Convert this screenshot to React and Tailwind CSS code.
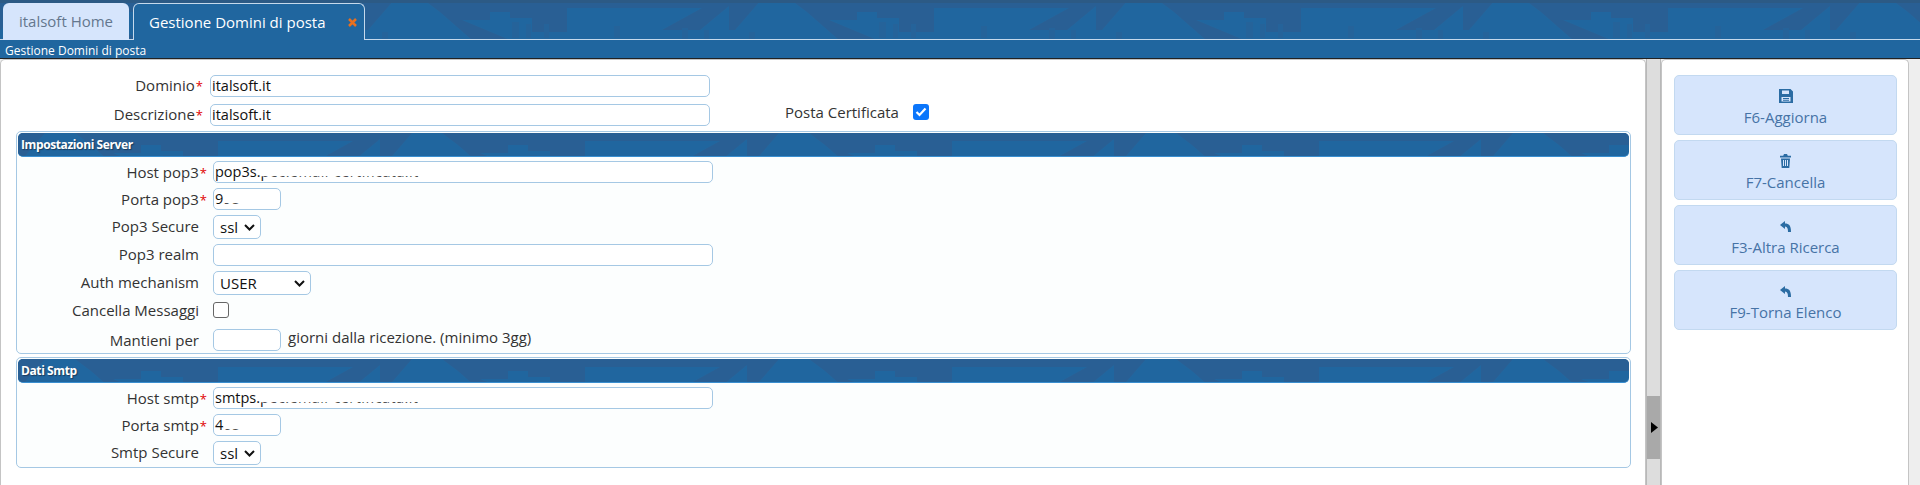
import React from 'react';

const Pattern = ({ id }) => (
  <svg className="absolute inset-0 w-full h-full">
    <defs>
      <pattern id={id} x="-5" width="367" height="40" patternUnits="userSpaceOnUse">
        <g fill="#295f94">
          <polygon points="0,0 32,0 6,30 0,30" />
          <polygon points="62,0 148,0 148,12 128,12 128,20 100,20 148,40 110,40 78,12" />
          <polygon points="148,0 270,0 270,8 205,8 205,32 170,32 170,18 148,18" />
          <polygon points="270,0 367,0 367,6 338,30 300,30 340,8 270,8" />
        </g>
        <g fill="#25639a">
          <rect x="20" y="32" width="6" height="8" />
          <rect x="150" y="22" width="7" height="16" />
          <rect x="164" y="24" width="5" height="14" />
          <rect x="182" y="24" width="5" height="14" />
          <rect x="252" y="26" width="6" height="12" />
          <rect x="320" y="28" width="6" height="12" />
          <rect x="342" y="30" width="5" height="10" />
        </g>
      </pattern>
    </defs>
    <rect width="100%" height="100%" fill={`url(#${id})`} />
  </svg>
);

const Label = ({ text, required, top, lift }) => (
  <div className={`${top ? 'w-[194px] pr-[7px]' : 'w-[191px] pr-[6px]'} ${lift ? 'pb-[2px]' : ''} shrink-0 text-right text-[#333] leading-[20px]`}>
    {text}
    {required ? <span className="text-[#e00000] text-[13px] ml-[1px]">*</span> : <span className="inline-block w-[8px]" />}
  </div>
);

const TextBox = ({ width = 'w-[500px]', children }) => (
  <div className={`${width} h-[22px] shrink-0 flex items-center bg-white border border-[#a5c8e4] rounded-[5px] pl-[1px] text-[14.500px] text-[#111] overflow-hidden whitespace-nowrap`}>
    {children}
  </div>
);

// the reference has these values partly wiped out, only the bottom of the letters is left
const Wiped = ({ children }) => (
  <span className="[clip-path:inset(70%_0_0_0)] tracking-[0.4px]">{children}</span>
);

const SelectBox = ({ width, value }) => (
  <div className={`${width} h-[24px] shrink-0 flex items-center justify-between bg-white border border-[#a5c8e4] rounded-[5px] pl-[6px] pr-[5px] text-[15px] text-[#111]`}>
    {value}
    <svg width="11" height="7" viewBox="0 0 11 7"><path d="M1 1l4.500 4.500L10 1" fill="none" stroke="#111" strokeWidth="2" /></svg>
  </div>
);

const Row = ({ label, required, lift, mt, children }) => (
  <div className={`flex items-center ${mt}`}>
    <Label text={label} required={required} lift={lift} />
    {children}
  </div>
);

const SectionHeader = ({ id, title }) => (
  <div className="relative h-[24px] mx-[1px] mt-[1px] bg-[#20669f] rounded-[5px] border-b border-[#3a8fd0] overflow-hidden flex items-center pl-[3px]">
    <Pattern id={id} />
    <span className="relative text-white font-bold text-[12px] tracking-[-0.4px] [text-shadow:1px_1px_1px_#1a3c5c]">{title}</span>
  </div>
);

const ActionButton = ({ icon, label }) => (
  <button className="h-[60px] w-[223px] flex flex-col items-center pt-[12px] bg-[#d6e5fc] border border-[#c3d9f0] rounded-[5px] text-[#4673a6] text-[15px]">
    <span className="h-[16px] flex items-center text-[#2b6ca3]">{icon}</span>
    <span className="leading-[20px] mt-[3px]">{label}</span>
  </button>
);

const SaveIcon = () => (
  <svg width="14" height="14" viewBox="0 0 14 14">
    <path
      fillRule="evenodd"
      fill="currentColor"
      d="M0 0h11.500L14 2.500V14H0zM3 1.500V5h7V1.500zM2.500 8v4.500h9V8zM4 9h6v1H4zM4 10.800h6v1H4z"
    />
  </svg>
);

const TrashIcon = () => (
  <svg width="11" height="14" viewBox="0 0 11 14">
    <path
      fillRule="evenodd"
      fill="currentColor"
      d="M0 1.800h3.200L4 0h3l.8 1.800H11v1.700H0zM1 4.500h9L9.300 14H1.700zM3 6v6h1V6zM5 6v6h1V6zM7 6v6h1V6z"
    />
  </svg>
);

const ReplyIcon = () => (
  <svg width="11" height="11" viewBox="0 0 11 11">
    <path fill="currentColor" d="M0 4L5 0V2.500C9 2.500 11 4.500 11 11H8C8 7.500 7.500 6 5 5.500V8Z" />
  </svg>
);

export default function App() {
  return (
    <div className="h-[485px] overflow-hidden bg-[#eeeeee] text-[15px]" style={{ fontFamily: '"Open Sans", sans-serif' }}>
      <div className="relative h-[40px] bg-[#20669f] overflow-hidden">
        <Pattern id="tabs-bg" />
        <div className="absolute left-0 right-0 top-0 h-[3px] bg-[#2c5a85]" />
        <div className="absolute left-0 right-0 bottom-0 h-px bg-[#c5d9ec]" />
        <div className="relative flex items-end h-full pl-[3px] gap-[4px]">
          <div className="w-[126px] h-[37px] bg-[#d6e5fc] rounded-t-[6px] flex items-center justify-center text-[#64778e] text-[15px]">
            italsoft Home
          </div>
          <div className="w-[232px] h-[37px] bg-[#20669f] border border-b-0 border-[#c5d9ec] rounded-t-[6px] flex items-center pl-[15px] text-white text-[15px]">
            Gestione Domini di posta
            <svg className="ml-[22px]" width="9" height="9" viewBox="0 0 9 9"><path d="M1 1l7 7M8 1L1 8" stroke="#e8701f" strokeWidth="2.500" /></svg>
          </div>
        </div>
      </div>

      <div className="h-[19px] bg-[#20669f] border-b border-[#222] pl-[5px] text-white text-[12px] leading-[21px]">
        Gestione Domini di posta
      </div>

      <div className="flex h-[426px]">
        <div className="w-[1646px] shrink-0 bg-white border border-[#c4c4c4] border-b-0 rounded-t-[5px] pt-[15px] pl-[15px]">
          <div className="flex items-center h-[22px]">
            <Label text="Dominio" required top lift />
            <TextBox>italsoft.it</TextBox>
          </div>
          <div className="flex items-center h-[22px] mt-[7px]">
            <Label text="Descrizione" required top lift />
            <TextBox>italsoft.it</TextBox>
            <span className="ml-[75px] mb-[6px] text-[#333]">Posta Certificata</span>
            <span className="ml-[14px] mb-[6px] w-[16px] h-[16px] bg-[#0b76fb] rounded-[3px] flex items-center justify-center">
              <svg width="12" height="10" viewBox="0 0 12 10"><path d="M1.500 5l3 3 6-6.500" fill="none" stroke="#fff" strokeWidth="2.200" /></svg>
            </span>
          </div>

          <div className="w-[1615px] h-[223px] mt-[5px] border border-[#a5c8e4] rounded-[5px] bg-[#fcfefe]">
            <SectionHeader id="server-bg" title="Impostazioni Server" />
            <div className="pl-[5px] pt-[4px]">
              <Row label="Host pop3" required>
                <TextBox><span>pop3s.</span><Wiped>pec.email-certificata.it</Wiped></TextBox>
              </Row>
              <Row label="Porta pop3" required mt="mt-[5px]">
                <TextBox width="w-[68px]"><span>9</span><Wiped>95</Wiped></TextBox>
              </Row>
              <Row label="Pop3 Secure" lift mt="mt-[5px]">
                <SelectBox width="w-[48px]" value="ssl" />
              </Row>
              <Row label="Pop3 realm" lift mt="mt-[5px]">
                <TextBox />
              </Row>
              <Row label="Auth mechanism" lift mt="mt-[5px]">
                <SelectBox width="w-[98px]" value="USER" />
              </Row>
              <Row label="Cancella Messaggi" mt="mt-[5px]">
                <span className="w-[16px] h-[16px] bg-white border-[1.500px] border-[#666] rounded-[3px]" />
              </Row>
              <Row label="Mantieni per" mt="mt-[9px]">
                <TextBox width="w-[68px]" />
                <span className="ml-[7px] self-start leading-[17px] text-[#333]">giorni dalla ricezione. (minimo 3gg)</span>
              </Row>
            </div>
          </div>

          <div className="w-[1615px] h-[111px] mt-[3px] border border-[#a5c8e4] rounded-[5px] bg-[#fcfefe]">
            <SectionHeader id="smtp-bg" title="Dati Smtp" />
            <div className="pl-[5px] pt-[4px]">
              <Row label="Host smtp" required>
                <TextBox><span>smtps.</span><Wiped>pec.email-certificata.it</Wiped></TextBox>
              </Row>
              <Row label="Porta smtp" required mt="mt-[5px]">
                <TextBox width="w-[68px]"><span>4</span><Wiped>65</Wiped></TextBox>
              </Row>
              <Row label="Smtp Secure" lift mt="mt-[5px]">
                <SelectBox width="w-[48px]" value="ssl" />
              </Row>
            </div>
          </div>
        </div>

        <div className="relative w-[15px] shrink-0 bg-[#dddddd] border-x border-[#b8b8b8]">
          <div className="absolute left-0 right-0 top-[337px] h-[63px] bg-[#a9a9a9] flex items-center justify-center">
            <svg width="8" height="11" viewBox="0 0 8 11"><path d="M1 0l7 5.500L1 11z" fill="#000" /></svg>
          </div>
        </div>

        <div className="w-[248px] shrink-0 bg-white border border-[#c4c4c4] border-b-0 rounded-t-[5px] pt-[15px] pl-[12px] flex flex-col gap-[5px]">
          <ActionButton icon={<SaveIcon />} label="F6-Aggiorna" />
          <ActionButton icon={<TrashIcon />} label="F7-Cancella" />
          <ActionButton icon={<ReplyIcon />} label="F3-Altra Ricerca" />
          <ActionButton icon={<ReplyIcon />} label="F9-Torna Elenco" />
        </div>
      </div>
    </div>
  );
}
